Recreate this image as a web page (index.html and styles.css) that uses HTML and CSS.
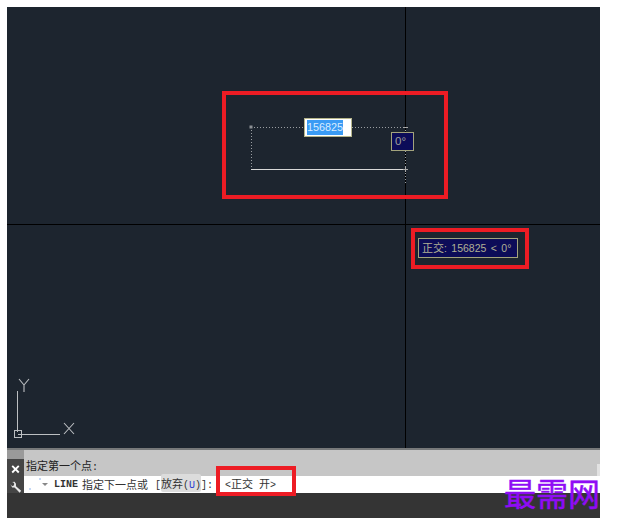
FILE: index.html
```html
<!DOCTYPE html>
<html lang="zh">
<head>
<meta charset="utf-8">
<title>LINE</title>
<link rel="stylesheet" href="styles.css">
</head>
<body>
<div class="app">
  <main class="canvas">
    <svg class="drawing" width="593" height="441" viewBox="7 7 593 441" xmlns="http://www.w3.org/2000/svg">
      <path d="M405.5 7V448M7 224.500H600" stroke="#000" fill="none"/>
      <path d="M251 127.500H304M352 127.500H405M251.500 127V169M405.500 127V171M405.500 173V184" stroke="#9a9ea2" stroke-dasharray="1 2" fill="none"/>
      <path d="M251 169.500H408" stroke="#d8d8d8" fill="none"/>
      <rect x="249.500" y="125.500" width="3" height="3" fill="#8d9195"/>
      <path d="M403 127.500h5M403 169.500h5M405.500 167v5" stroke="#a8a8a8" fill="none"/>
      <g stroke="#bcbfc2" fill="none">
        <path d="M17.500 391V432M18 434.500H60"/>
        <rect x="14.500" y="430.500" width="7" height="7"/>
        <path d="M19 379L24 385L29 379M24 385V392" stroke-width="1.100"/>
        <path d="M64 423L74 434M74 423L64 434" stroke-width="1.100"/>
      </g>
    </svg>
    <div class="dyn-input"><span class="selected">156825</span></div>
    <div class="tip tip-angle">0°</div>
    <div class="tip tip-ortho"><span class="cjk">正交</span>: 156825 &lt; 0°</div>
    <div class="mark mark-draw"></div>
    <div class="mark mark-ortho"></div>
  </main>
  <section class="command">
    <div class="cmd-side">
      <div class="grip"></div>
      <svg class="close" width="9" height="9" viewBox="0 0 9 9" xmlns="http://www.w3.org/2000/svg"><path d="M1 1L8 8M8 1L1 8" stroke="#fff" stroke-width="2"/></svg>
      <svg class="wrench" width="13" height="13" viewBox="0 0 13 13" xmlns="http://www.w3.org/2000/svg"><path d="M1 3.500L3 5.500L5 4.500L5 2L3 1L5.500 .8L7 3L7 5.500L12.500 10.500L11 12.500L5.500 7L3 7Z" fill="#e8e8e8"/></svg>
    </div>
    <div class="cmd-main">
      <div class="history">指定第一个点<span class="mono">:</span></div>
      <div class="prompt">
        <span class="dot dot-a"></span>
        <span class="dot dot-b"></span>
        <span class="arrow"></span>
        <span class="kw">LINE</span>
        <span class="p-text">指定下一点或</span>
        <span class="p-opts"><span class="mono">[</span><span class="opt">放弃<span class="mono">(<b>U</b>)</span></span><span class="mono">]:</span></span>
        <span class="p-input"><span class="mono">&lt;</span>正交<span class="gap"></span>开<span class="mono">&gt;</span></span>
      </div>
    </div>
    <div class="scroll-box"></div>
  </section>
  <footer class="status"></footer>
  <div class="mark mark-cmd"></div>
  <div class="watermark">最需网</div>
</div>
</body>
</html>
```
FILE: styles.css
```css
* { box-sizing: border-box; }
html, body { margin: 0; background: #fff; }
body { width: 617px; height: 524px; overflow: hidden; }
.app { position: relative; width: 617px; height: 524px; padding: 7px 17px 6px 7px; display: flex; flex-direction: column; font-family: "Noto Sans CJK SC", "Liberation Sans", sans-serif; }
.canvas { position: relative; flex: none; height: 441px; background: #1d252f; overflow: hidden; }
.drawing { position: absolute; left: 0; top: 0; display: block; }
.dyn-input { position: absolute; left: 297px; top: 111px; width: 48px; height: 19px; background: #fff; border: 1px solid #b5b58a; padding: 1px 2px; font: 10.800px/15px "Liberation Sans", sans-serif; }
.selected { display: block; width: 36px; height: 15px; background: #3a9bf4; color: #d8ecff; }
.tip { position: absolute; background: #0c0c58; border: 1px solid #a3a37c; color: #b0b094; white-space: nowrap; }
.tip-angle { left: 384px; top: 125px; width: 23px; height: 19px; padding-left: 3px; font: 11.500px/17px "Liberation Sans", sans-serif; color: #a0a098; }
.tip-ortho { left: 411px; top: 231px; width: 100px; height: 20px; padding-left: 3px; font: 10.500px/16px "Liberation Sans", sans-serif; word-spacing: 1.500px; }
.cjk { font: 11px/16px "Noto Sans CJK SC", sans-serif; }
.mark { position: absolute; border: 4px solid #ed1c24; }
.mark-draw { left: 215px; top: 84px; width: 226px; height: 108px; }
.mark-ortho { left: 404px; top: 221px; width: 118px; height: 41px; }
.mark-cmd { left: 216px; top: 466px; width: 80px; height: 30px; }
.command { position: relative; flex: none; height: 45px; display: flex; background: #c6c6c6; border-top: 2px solid #77797a; }
.cmd-side { flex: none; width: 17px; background: #454545; display: flex; flex-direction: column; align-items: center; }
.grip { width: 100%; height: 10px; background-color: #9a9a9a; background-image: radial-gradient(#c4c4c4 40%, transparent 45%); background-size: 2px 2px; background-position: 0 2px; background-repeat: repeat-x; }
.close { margin-top: 6px; }
.wrench { margin-top: 7px; }
.cmd-main { flex: 1; display: flex; flex-direction: column; min-width: 0; }
.history { height: 26px; padding: 8px 0 0 2px; font-size: 11px; line-height: 15px; color: #222; }
.mono { font-family: "Liberation Mono", monospace; font-size: 10px; }
.prompt { position: relative; height: 17px; background: #fff; display: flex; align-items: center; font-size: 11px; line-height: 15px; color: #333; padding-left: 18px; }
.dot { position: absolute; width: 2px; height: 2px; background: #c5d8f5; }
.dot-a { left: 15px; top: 2px; }
.dot-b { left: 5px; top: 12px; }
.arrow { width: 0; height: 0; margin-right: 6px; border: 3px solid transparent; border-top: 3px solid #888; border-bottom: 0; }
.kw { font: bold 10px/15px "Liberation Mono", monospace; margin-right: 4px; color: #333; }
.p-text { margin-right: 7px; white-space: nowrap; }
.p-opts { white-space: nowrap; margin-right: 12px; }
.opt { background: #dcdcdc; border-radius: 2px; padding: 1px 0; }
.opt b { color: #2c3fd0; font-weight: normal; }
.p-input { white-space: nowrap; }
.gap { display: inline-block; width: 6px; }
.scroll-box { position: absolute; right: 0; top: 14px; width: 3px; height: 12px; background: #e2e2e2; }
.status { flex: none; height: 25px; background: #343434; }
.watermark { position: absolute; left: 504px; top: 473px; font: 32px/38px "Noto Sans CJK SC", serif; -webkit-text-stroke: .5px #8f0cf5; color: #8f0cf5; white-space: nowrap; }
```
